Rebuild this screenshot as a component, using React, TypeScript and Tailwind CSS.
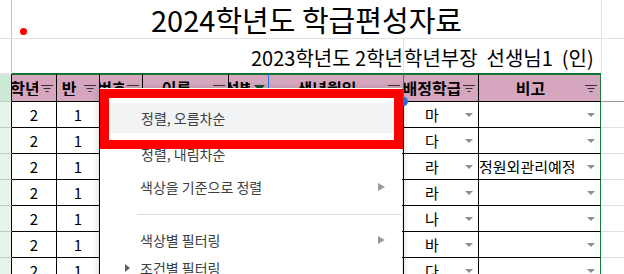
import React from 'react';

const FONT = "font-['Noto_Sans_CJK_KR','Noto_Sans',sans-serif]";

const FilterIcon = () => (
    <svg width="12" height="8" viewBox="0 0 12 8">
        <path d="M0 1.5h12M2.5 4.5h7M4.5 7.5h3" stroke="#333" strokeWidth="1.2" />
    </svg>
);

const ActiveFilter = () => (
    <svg width="11" height="6" viewBox="0 0 11 6">
        <path d="M0 0h11L5.5 6z" fill="#0d4f2a" />
    </svg>
);

const Caret = () => (
    <svg width="8" height="4" viewBox="0 0 8 4">
        <path d="M0 0h8L4 4z" fill="#8f8f8f" />
    </svg>
);

const SubArrow = () => (
    <svg width="7" height="8" viewBox="0 0 7 8">
        <path d="M0 0l7 4-7 4z" fill="#9a9a9a" />
    </svg>
);

interface HeaderCol {
    label: string;
    width: string;
    border: string;
    active?: boolean;
}

const headers: HeaderCol[] = [
    { label: '학년', width: 'w-[45px]', border: 'border-r-black' },
    { label: '반', width: 'w-[43px]', border: 'border-r-black' },
    { label: '번호', width: 'w-[43px]', border: 'border-r-black' },
    { label: '이름', width: 'w-[86px]', border: 'border-r-black' },
    { label: '성별', width: 'w-[40px]', border: 'border-r-[#1a73e8]', active: true },
    { label: '생년월일', width: 'w-[135px]', border: 'border-r-[#1a73e8]' },
    { label: '배정학급', width: 'w-[75px]', border: 'border-r-black' },
    { label: '비고', width: 'w-[122px]', border: 'border-r-[#188038]' },
];

const classes = ['마', '다', '라', '라', '나', '바', '다'];
const notes = ['', '', '정원외관리예정', '', '', '', ''];

const App: React.FC = () => {
    return (
        <div className={`relative w-[624px] h-[274px] overflow-hidden bg-white text-black ${FONT}`}>
            {/* title row */}
            <div className="flex h-[39px] border-b border-[#e2e2e2]">
                <div className="w-[12px] shrink-0 border-r border-[#c4c4c4]" />
                <div className="w-[589px] shrink-0 flex items-center justify-center text-[29px] leading-none whitespace-nowrap">
                    2024학년도 학급편성자료
                </div>
                <div className="flex-1 border-l border-[#e2e2e2]" />
            </div>

            {/* sub title row */}
            <div className="flex h-[34px]">
                <div className="w-[12px] shrink-0 border-r border-[#c4c4c4]" />
                <div className="w-[392px] shrink-0 flex items-end justify-end pb-[5px] text-[20px] leading-none whitespace-nowrap border-r border-[#e2e2e2]">
                    2023학년도 2학년
                </div>
                <div className="w-[197px] shrink-0 flex items-end pb-[5px] text-[20px] leading-none whitespace-nowrap overflow-hidden">
                    학년부장&nbsp;&nbsp;선생님1&nbsp;&nbsp;(인)
                </div>
                <div className="flex-1 border-l border-[#e2e2e2]" />
            </div>

            {/* header row */}
            <div className="flex h-[29px]">
                <div className="w-[12px] shrink-0 bg-[#cce9d4] border-t-2 border-t-[#e2e2e2] border-r border-r-black border-b border-b-[#c6c6c6]" />
                {headers.map(h => (
                    <div
                        key={h.label}
                        className={`${h.width} shrink-0 flex items-center bg-[#d5a6bd] border-t-2 border-t-[#137333] border-b border-b-black border-r ${h.border}`}
                    >
                        <div className="flex-1 min-w-0 flex justify-center overflow-hidden whitespace-nowrap text-[16px] font-bold leading-none">
                            {h.label}
                        </div>
                        <div className="w-[18px] shrink-0 flex justify-center">
                            {h.active ? <ActiveFilter /> : <FilterIcon />}
                        </div>
                    </div>
                ))}
                <div className="flex-1 border-b border-[#9a9a9a]" />
            </div>

            {/* data rows */}
            {classes.map((c, i) => (
                <div key={i} className="flex h-[26px] text-[15px] leading-none">
                    <div className="w-[12px] shrink-0 bg-[#e6f4ea] border-r border-r-black border-b border-b-[#c6c6c6]" />
                    <div className="w-[45px] shrink-0 flex items-center justify-center border-r border-b border-black">2</div>
                    <div className="w-[43px] shrink-0 flex items-center justify-center border-r border-b border-black">1</div>
                    <div className="w-[43px] shrink-0 border-r border-b border-black" />
                    <div className="w-[86px] shrink-0 border-r border-b border-black" />
                    <div className="w-[40px] shrink-0 border-r border-b border-black" />
                    <div className="w-[135px] shrink-0 border-r border-b border-black" />
                    <div className="w-[75px] shrink-0 flex items-center border-r border-b border-black">
                        <div className="flex-1 text-center">{c}</div>
                        <div className="w-[18px] shrink-0 flex justify-center"><Caret /></div>
                    </div>
                    <div className="w-[122px] shrink-0 flex items-center border-r border-r-[#188038] border-b border-b-black">
                        <div className="flex-1 min-w-0 whitespace-nowrap overflow-hidden">{notes[i]}</div>
                        <div className="w-[18px] shrink-0 flex justify-center"><Caret /></div>
                    </div>
                    <div className="flex-1 border-b border-[#e2e2e2]" />
                </div>
            ))}

            {/* marker dot */}
            <div className="absolute left-[20px] top-[28px] w-[7px] h-[7px] rounded-full bg-[#ff0000]" />

            {/* selection handle */}
            <div className="absolute left-[399px] top-[97px] w-[9px] h-[9px] rounded-full bg-[#1a73e8]" />

            {/* filter menu */}
            <div className="absolute left-[100px] top-[88px] w-[302px] h-[200px] bg-white shadow-[0_2px_6px_2px_rgba(60,64,67,0.2)] text-[14px] text-[#3c4043] leading-none">
                <div className="h-[15px]" />
                <div className="h-[30px] flex items-center pl-[41px] bg-[#f1f3f4]">정렬, 오름차순</div>
                <div className="h-[6px]" />
                <div className="h-[30px] flex items-center pl-[41px]">정렬, 내림차순</div>
                <div className="h-[3px]" />
                <div className="h-[30px] flex items-center justify-between pl-[40px] pr-[17px]">
                    <span>색상을 기준으로 정렬</span>
                    <SubArrow />
                </div>
                <div className="h-[24px] pt-[12px]">
                    <div className="ml-[37px] h-px bg-[#dadce0]" />
                </div>
                <div className="h-[28px] flex items-center justify-between pl-[40px] pr-[17px]">
                    <span>색상별 필터링</span>
                    <SubArrow />
                </div>
                <div className="h-[28px] flex items-center pl-[25px]">
                    <svg width="5" height="8" viewBox="0 0 5 8">
                        <path d="M0 0l5 4-5 4z" fill="#5f6368" />
                    </svg>
                    <span className="ml-[10px]">조건별 필터링</span>
                </div>
            </div>

            {/* highlight box */}
            <div className="absolute left-[100px] top-[89px] w-[303px] h-[60px] border-[9px] border-[#ff0000]" />
        </div>
    );
};

export default App;
